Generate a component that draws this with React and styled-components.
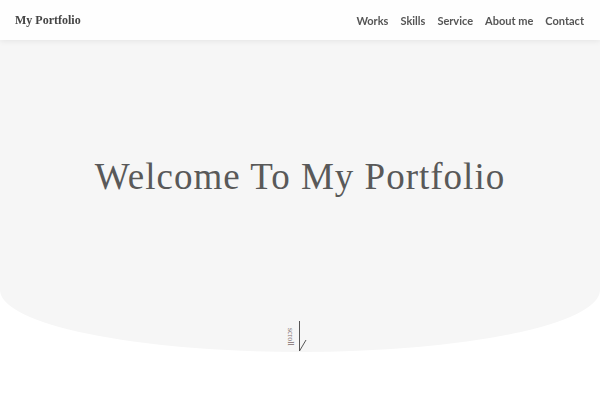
import React from "react";
import styled, { createGlobalStyle } from "styled-components";

const GlobalStyle = createGlobalStyle`
  html, body {
    margin: 0;
    padding: 0;
    background: #ffffff;
  }
  * {
    box-sizing: border-box;
  }
`;

const links = ["Works", "Skills", "Service", "About me", "Contact"];

const App = () => {
  return (
    <>
      <GlobalStyle />
      <Header>
        <Logo>My Portfolio</Logo>
        <Nav>
          {links.map((link) => (
            <NavLink key={link} href="#">
              {link}
            </NavLink>
          ))}
        </Nav>
      </Header>
      <Hero>
        <Title>Welcome To My Portfolio</Title>
        <Scroll>
          <ScrollLabel>scroll</ScrollLabel>
          <svg width="10" height="31" viewBox="0 0 10 31">
            <path d="M1.5 0 V30 L8 19" fill="none" stroke="#444" strokeWidth="0.9" />
          </svg>
        </Scroll>
      </Hero>
    </>
  );
};

const Header = styled.header`
  position: fixed;
  top: 0;
  left: 0;
  right: 0;
  z-index: 10;
  height: 40px;
  padding: 0 16px 0 15px;
  display: flex;
  align-items: center;
  justify-content: space-between;
  background: #fefefe;
  box-shadow: 0 1px 6px rgba(0, 0, 0, 0.08);
`;

const Logo = styled.h1`
  margin: 0;
  font-family: "Liberation Serif", serif;
  font-size: 12px;
  font-weight: bold;
  color: #444;
`;

const Nav = styled.nav`
  display: flex;
  gap: 12px;
`;

const NavLink = styled.a`
  font-family: Lato, sans-serif;
  font-size: 11px;
  font-weight: 700;
  color: #555;
  text-decoration: none;
`;

const Hero = styled.section`
  position: relative;
  height: 88vh;
  display: flex;
  align-items: center;
  justify-content: center;
  background: #f6f6f6;
  border-radius: 0 0 50% 50% / 0 0 62px 62px;
`;

const Title = styled.h2`
  margin: 0;
  font-family: "Liberation Serif", serif;
  font-size: 37px;
  font-weight: normal;
  letter-spacing: 1px;
  color: #595959;
`;

const Scroll = styled.div`
  position: absolute;
  bottom: 0;
  left: 286px;
  display: flex;
  align-items: flex-end;
  gap: 3px;
`;

const ScrollLabel = styled.span`
  writing-mode: vertical-rl;
  font-family: "Liberation Serif", serif;
  font-size: 8px;
  color: #7a6a6a;
  margin-bottom: 6px;
`;

export default App;
